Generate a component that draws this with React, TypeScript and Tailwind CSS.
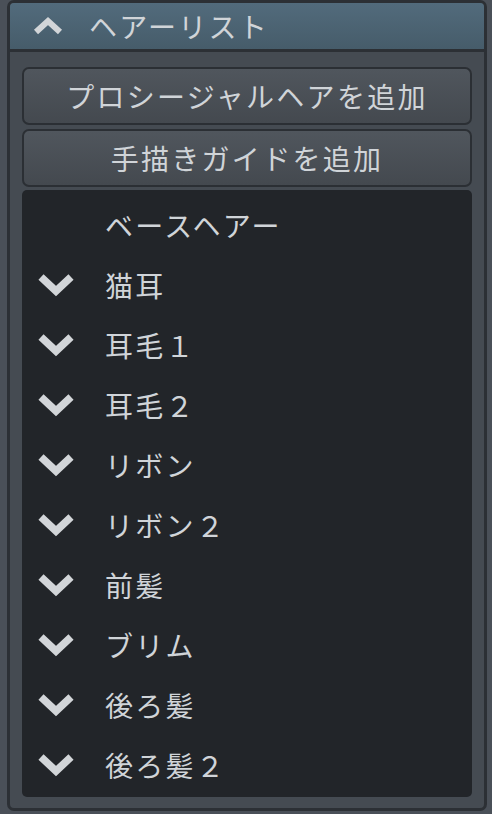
const items = [
  { label: 'ベースヘアー', open: false },
  { label: '猫耳', open: true },
  { label: '耳毛１', open: true },
  { label: '耳毛２', open: true },
  { label: 'リボン', open: true },
  { label: 'リボン２', open: true },
  { label: '前髪', open: true },
  { label: 'ブリム', open: true },
  { label: '後ろ髪', open: true },
  { label: '後ろ髪２', open: true },
];

const font = { fontFamily: '"Noto Sans CJK JP", "Noto Sans", sans-serif' };

function ChevronDown() {
  return (
    <svg width="38" height="26" viewBox="0 0 38 26" className="shrink-0">
      <path d="M4 5 L19 19 L34 5" fill="none" stroke="#d2d5d8" strokeWidth="7.5" strokeLinejoin="miter" />
    </svg>
  );
}

function ChevronUp() {
  return (
    <svg width="30" height="20" viewBox="0 0 30 20" className="shrink-0">
      <path d="M3 16 L15 5 L27 16" fill="none" stroke="#d2d5d8" strokeWidth="6" strokeLinejoin="miter" />
    </svg>
  );
}

function ActionButton({ label }: { label: string }) {
  return (
    <button className="h-[58px] w-full rounded-[7px] border-2 border-[#2b2f34] bg-gradient-to-b from-[#50565d] to-[#44494f] text-[28px] tracking-[2.3px] text-[#d0d4d8] flex items-center justify-center">
      {label}
    </button>
  );
}

export default function App() {
  return (
    <div className="w-[492px] h-[814px] bg-[#4a5058] pl-[7px] pr-[5px]" style={font}>
      <div className="h-[811px] rounded-[7px] border-[3px] border-[#2c3035] bg-[#454b52] flex flex-col overflow-hidden">
        {/* header */}
        <div className="h-[49px] shrink-0 border-b-[3px] border-[#2c3035] bg-gradient-to-b from-[#526b7c] to-[#465c6a] flex items-center pl-[23px] gap-[26px]">
          <ChevronUp />
          <span className="text-[28px] tracking-[2.3px] text-[#d0d4d8]">ヘアーリスト</span>
        </div>

        <div className="flex-1 flex flex-col px-[12px] pt-[15px] pb-[11px]">
          <ActionButton label="プロシージャルヘアを追加" />
          <div className="h-[4px]" />
          <ActionButton label="手描きガイドを追加" />
          <div className="h-[3px]" />

          {/* hair list */}
          <div className="flex-1 rounded-[5px] bg-[#222529] pt-[5px]">
            {items.map((it) => (
              <div key={it.label} className="h-[60px] flex items-center pl-[15px]">
                <div className="w-[38px] shrink-0">{it.open && <ChevronDown />}</div>
                <span className="ml-[30px] text-[28px] tracking-[2.3px] text-[#d0d4d8]">{it.label}</span>
              </div>
            ))}
          </div>
        </div>
      </div>
    </div>
  );
}
